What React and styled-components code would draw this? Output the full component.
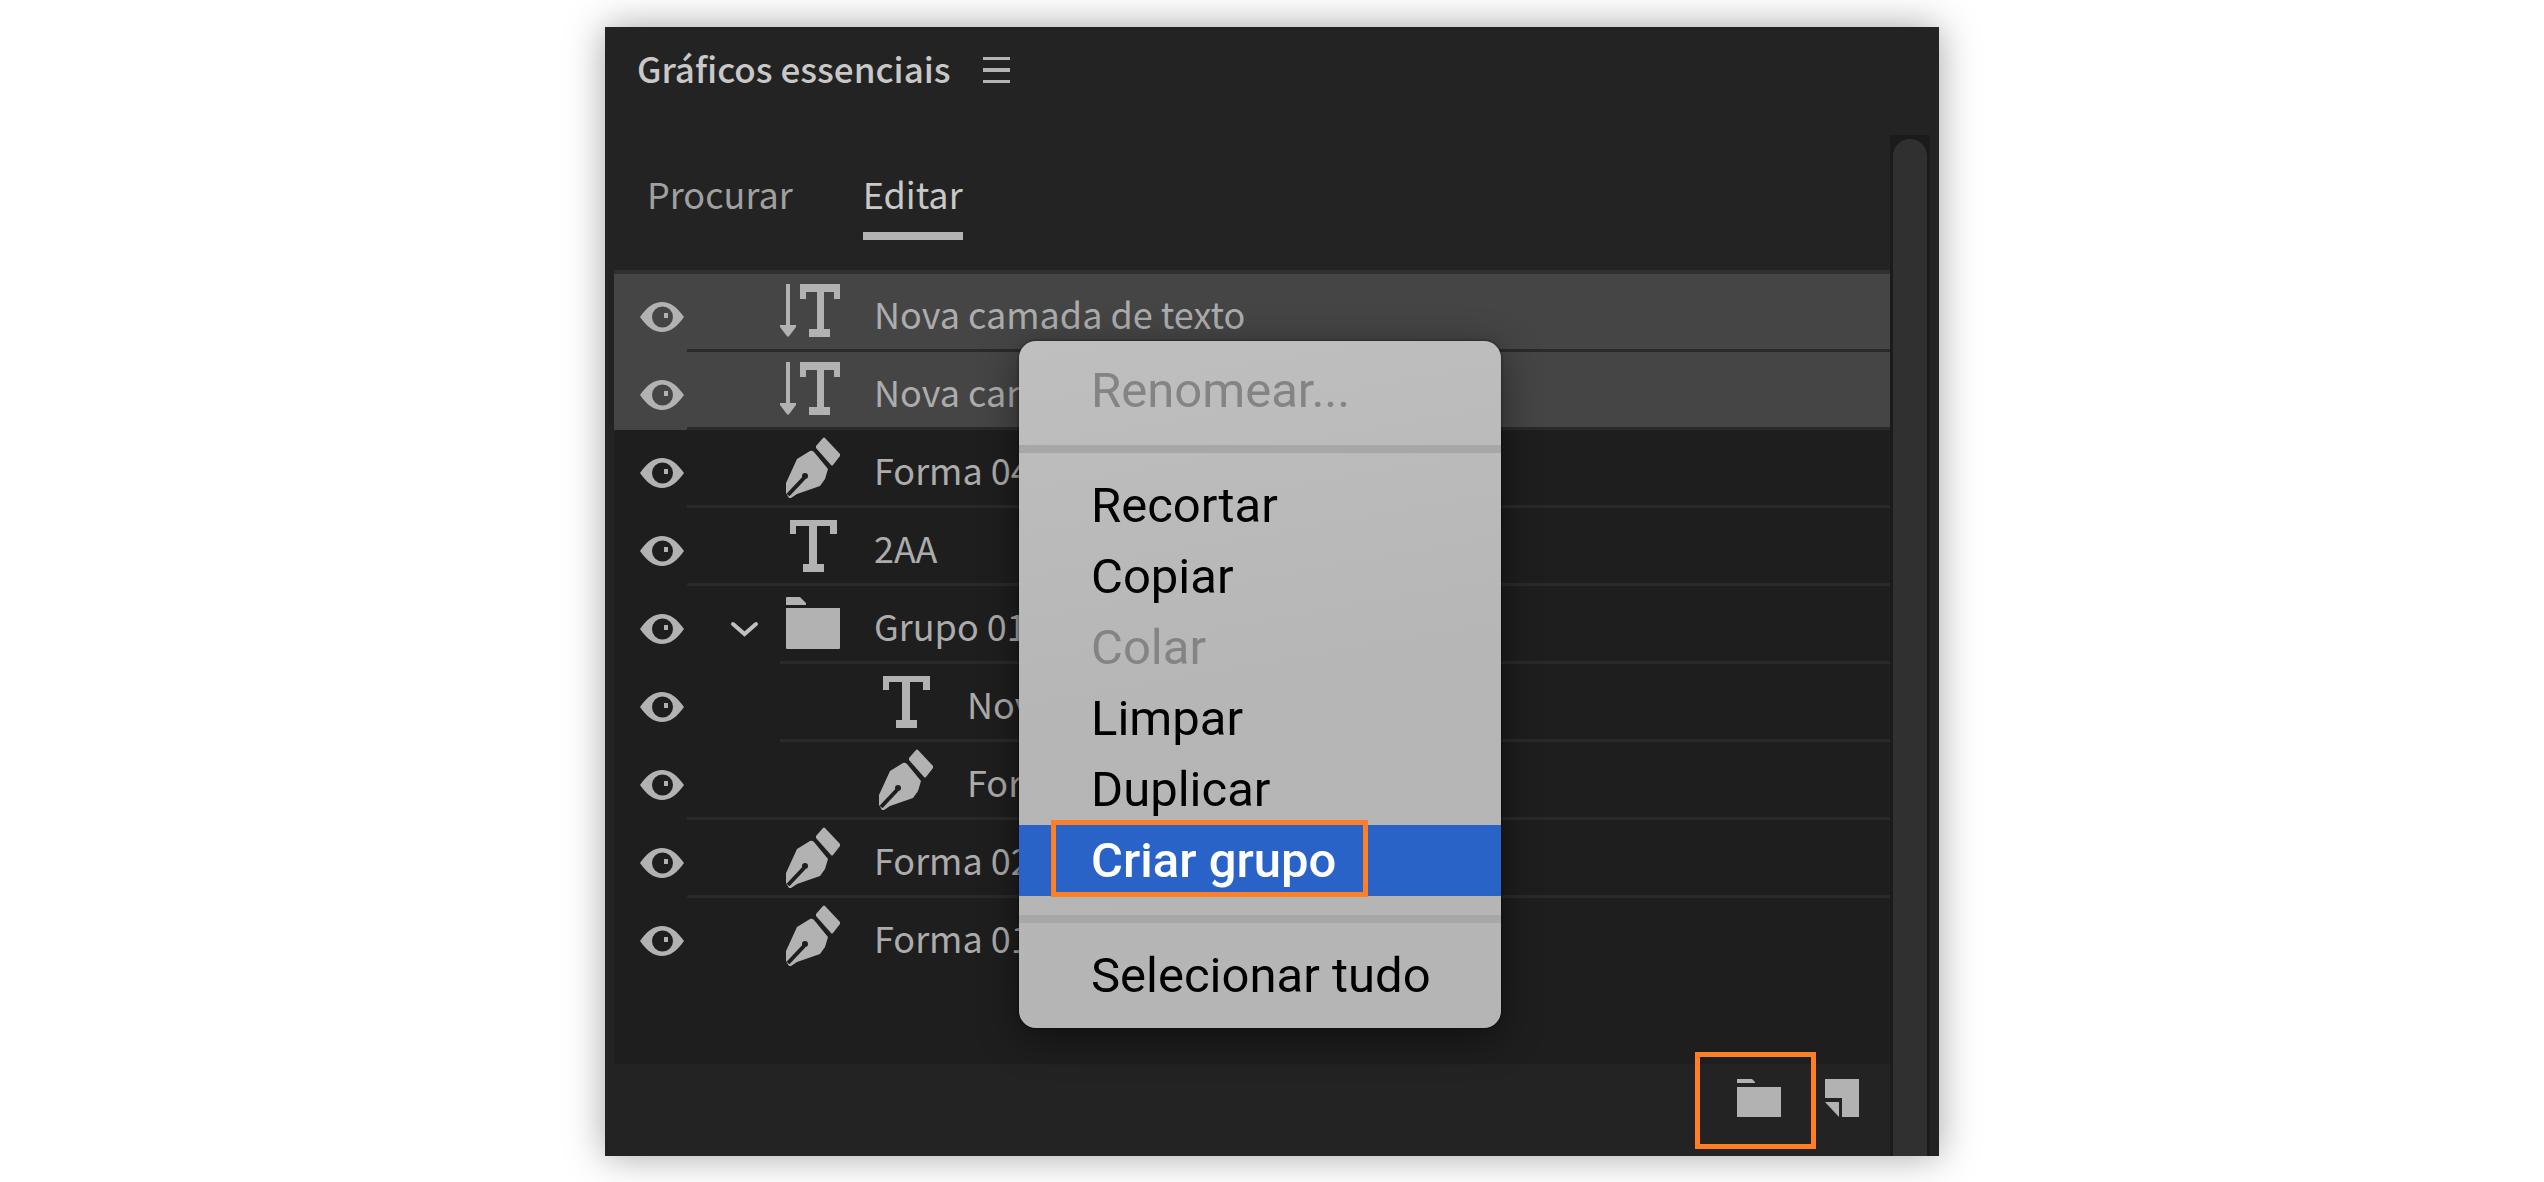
import React, { useState } from 'react'
import styled, { createGlobalStyle } from 'styled-components'

const GlobalStyle = createGlobalStyle`
  * {
    box-sizing: border-box;
  }
  body {
    margin: 0;
    background: #fff;
  }
  button {
    margin: 0;
    padding: 0;
    border: 0;
    background: none;
    color: inherit;
    font: inherit;
    cursor: pointer;
  }
  svg {
    display: block;
    flex: none;
  }
`

const Page = styled.main`
  padding: 27px 0;
  font-family: 'Noto Sans CJK JP', 'Open Sans', sans-serif;
  font-size: 36px;
  color: #b0b0b0;
`

const Panel = styled.section`
  width: 100%;
  max-width: 1334px;
  margin: 0 auto;
  background: #232323;
  box-shadow: 0 0 36px rgba(0, 0, 0, 0.36);
`

const Header = styled.header`
  display: flex;
  align-items: center;
  gap: 32px;
  height: 108px;
  padding: 0 32px 22px;
`

const Title = styled.h1`
  height: 50px;
  margin: 0;
  font-size: 35px;
  font-weight: 500;
  line-height: 46px;
  color: #c8c8c8;
`

const Body = styled.div`
  display: flex;
  padding: 0 9px;
`

const Content = styled.div`
  flex: 1;
  min-width: 0;
`

const Scrollbar = styled.div`
  flex: none;
  width: 40px;
  padding: 4px 3px 0;
  background: #1b1b1b;
`

const Thumb = styled.div`
  height: 100%;
  border-radius: 17px 17px 0 0;
  background: #303030;
`

const Tabs = styled.div`
  display: flex;
  align-items: flex-start;
  gap: 70px;
  height: 135px;
  padding: 34px 33px 0;
`

const Tab = styled.button`
  height: 71px;
  padding-bottom: 15px;
  line-height: 48px;
  border-bottom: 8px solid ${(p) => (p.$active ? '#b4b4b4' : 'transparent')};
  color: ${(p) => (p.$active ? '#c8c8c8' : '#a0a0a0')};
`

// the context menu is placed against the list
const ListArea = styled.div`
  position: relative;
  min-height: 794px;
  border-top: 4px solid #303030;
  background: #1e1e1e;
`

const List = styled.ul`
  margin: 0;
  padding: 0;
  list-style: none;
`

const Row = styled.li`
  display: flex;
  height: 78px;
  background: ${(p) => (p.$selected ? '#454545' : 'transparent')};
`

const EyeButton = styled.button`
  flex: none;
  width: 73px;
  padding: 8px 0 0 26px;
`

const Gutter = styled.div`
  flex: none;
  width: ${(p) => p.$steps * 93}px;
`

const RowBody = styled.div`
  display: flex;
  flex: 1;
  min-width: 0;
  gap: 34px;
  padding-left: ${(p) => p.$steps * 93}px;
  border-bottom: 3px solid ${(p) => (p.$last ? 'transparent' : '#2a2a2a')};
`

const Label = styled.span`
  line-height: 78px;
  height: 75px;
  white-space: nowrap;
  color: #acacac;
`

const Menu = styled.div`
  position: absolute;
  top: 67px;
  left: 405px;
  width: 482px;
  padding: 14px 0 17px;
  border-radius: 17px;
  background: linear-gradient(170deg, #bfbfbf, #b6b6b6 50%, #b5b5b5);
  box-shadow: 0 10px 40px rgba(0, 0, 0, 0.45), 0 0 3px rgba(0, 0, 0, 0.6);
  font-family: Roboto, sans-serif;
  font-size: 49px;
`

const MenuItem = styled.button`
  position: relative;
  display: block;
  width: 100%;
  height: 71px;
  padding-left: 72px;
  line-height: 71px;
  text-align: left;
  white-space: nowrap;
  background: ${(p) => (p.$active ? '#2a63c8' : 'transparent')};
  color: ${(p) => (p.$active ? '#fff' : '#000')};
  font-weight: ${(p) => (p.$active ? 500 : 400)};

  &:disabled {
    color: #848484;
    cursor: default;
  }
`

const Separator = styled.hr`
  height: 8px;
  margin: 19px 0 17px;
  border: 0;
  background: #a7a7a7;
`

const Callout = styled.span`
  position: absolute;
  inset: ${(p) => p.$inset};
  border: 5px solid #ff7f27;
  pointer-events: none;
`

const Footer = styled.footer`
  display: flex;
  justify-content: flex-end;
  gap: 44px;
  height: 92px;
  padding: 15px 31px 39px;
`

const FooterButton = styled.button`
  position: relative;
`

const EyeIcon = () => (
  <svg width="44" height="30" viewBox="0 0 44 30" fill="#b2b2b2">
    <path
      fillRule="evenodd"
      d="M0 15C7 5 14 0 22 0s15 5 22 15c-7 10-14 15-22 15S7 25 0 15zM22.5 4.5a10.500 10.500 0 1 0 0 21 10.500 10.500 0 0 0 0-21z"
    />
    <rect x="24" y="11" width="4" height="5" />
  </svg>
)

const RowSvg = ({ children }) => (
  <svg width="60" height="75" viewBox="0 0 60 75" fill="#b2b2b2">{children}</svg>
)

const rowIcons = {
  verticalText: (
    <RowSvg>
      <path d="M6 10h4v41h6v2l-6 8-2 2-2-2-6-8v-2h6z" />
      <path d="M20 10h40v15h-6v-7H44v37h6v8H29v-8h8V18H26v7h-6z" />
    </RowSvg>
  ),
  text: (
    <RowSvg>
      <path d="M10 12h47v14h-7v-8H37v38h7v8H23v-8h6V18H16v8h-6z" />
    </RowSvg>
  ),
  pen: (
    <RowSvg>
      <path d="M43 8q1-1 2 0l15 16v2l-7 9q-1 1-2 0L36 18v-2z" />
      <path d="M30 21q2-1 4 1l14 17-3 10-5 7-23 8-6 4H9L6 63V53l11-24z" />
      <path d="M8 65 24 48" stroke="#1e1e1e" strokeWidth="4" />
      <circle cx="25" cy="46" r="3" fill="#1e1e1e" />
    </RowSvg>
  ),
  folder: (
    <RowSvg>
      <path d="M6 12q0-1 1-1h13l6 6v2H6zM6 22h54v40q0 1-1 1H7q-1 0-1-1z" />
    </RowSvg>
  ),
}

const ChevronIcon = () => (
  <svg width="93" height="75" viewBox="0 0 93 75" fill="none">
    <path d="M46 38 57.500 48 69 38" stroke="#c0c0c0" strokeWidth="4" strokeLinecap="round" />
  </svg>
)

const HamburgerIcon = () => (
  <svg width="27" height="26" viewBox="0 0 27 26" fill="#b4b4b4">
    <path d="M0 0h27v3H0zM0 11h27v4H0zM0 23h27v3H0z" />
  </svg>
)

const FolderIcon = () => (
  <svg width="44" height="38" viewBox="0 0 44 38" fill="#b2b2b2">
    <path d="M0 0h15l3 3v1H0zM0 8h44v30H0z" />
  </svg>
)

const NewLayerIcon = () => (
  <svg width="34" height="38" viewBox="0 0 34 38" fill="#b2b2b2">
    <path d="M0 0h34v38H17V19H0zM0 23h14v15z" />
  </svg>
)

// line: how many steps the separator under the row is pushed in
const layers = [
  { name: 'Nova camada de texto', icon: 'verticalText', depth: 0, line: 0, selected: true },
  { name: 'Nova camada de texto', icon: 'verticalText', depth: 0, line: 0, selected: true },
  { name: 'Forma 04', icon: 'pen', depth: 0, line: 0 },
  { name: '2AA', icon: 'text', depth: 0, line: 0 },
  { name: 'Grupo 01', icon: 'folder', depth: 0, line: 1, group: true },
  { name: 'Nova', icon: 'text', depth: 1, line: 1 },
  { name: 'Forma', icon: 'pen', depth: 1, line: 0 },
  { name: 'Forma 02', icon: 'pen', depth: 0, line: 0 },
  { name: 'Forma 01', icon: 'pen', depth: 0, line: 0 },
]

const menuGroups = [
  [{ label: 'Renomear...', disabled: true }],
  [
    { label: 'Recortar' },
    { label: 'Copiar' },
    { label: 'Colar', disabled: true },
    { label: 'Limpar' },
    { label: 'Duplicar' },
    { label: 'Criar grupo', active: true },
  ],
  [{ label: 'Selecionar tudo' }],
]

const ContextMenu = () => (
  <Menu role="menu">
    {menuGroups.map((group, i) => (
      <React.Fragment key={i}>
        {i > 0 && <Separator />}
        {group.map((item) => (
          <MenuItem key={item.label} role="menuitem" disabled={item.disabled} $active={item.active}>
            {item.label}
            {item.active && <Callout $inset="-5px 133px -1px 32px" />}
          </MenuItem>
        ))}
      </React.Fragment>
    ))}
  </Menu>
)

const App = () => {
  const [tab, setTab] = useState('Editar')

  return (
    <Page>
      <GlobalStyle />
      <Panel>
        <Header>
          <Title>Gráficos essenciais</Title>
          <button aria-label="Menu do painel"><HamburgerIcon /></button>
        </Header>
        <Body>
          <Content>
            <Tabs role="tablist">
              {['Procurar', 'Editar'].map((name) => (
                <Tab key={name} role="tab" aria-selected={tab === name} $active={tab === name} onClick={() => setTab(name)}>
                  {name}
                </Tab>
              ))}
            </Tabs>
            <ListArea>
              <List>
                {layers.map((layer, i) => (
                  <Row key={i} $selected={layer.selected}>
                    <EyeButton aria-label="Visibilidade"><EyeIcon /></EyeButton>
                    {layer.line > 0 && <Gutter $steps={layer.line}>{layer.group && <ChevronIcon />}</Gutter>}
                    <RowBody $steps={1 + layer.depth - layer.line} $last={i === layers.length - 1}>
                      {rowIcons[layer.icon]}
                      <Label>{layer.name}</Label>
                    </RowBody>
                  </Row>
                ))}
              </List>
              <ContextMenu />
            </ListArea>
            <Footer>
              <FooterButton aria-label="Criar grupo">
                <FolderIcon />
                <Callout $inset="-27px -35px -32px -42px" />
              </FooterButton>
              <FooterButton aria-label="Nova camada">
                <NewLayerIcon />
              </FooterButton>
            </Footer>
          </Content>
          <Scrollbar>
            <Thumb />
          </Scrollbar>
        </Body>
      </Panel>
    </Page>
  )
}

export default App
